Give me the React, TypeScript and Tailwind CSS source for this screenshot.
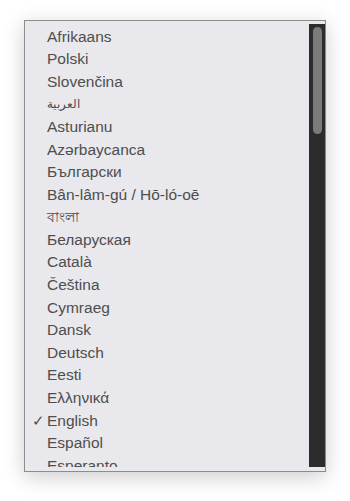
const LANGS = [
  "Afrikaans",
  "Polski",
  "Slovenčina",
  "العربية",
  "Asturianu",
  "Azərbaycanca",
  "Български",
  "Bân-lâm-gú / Hō-ló-oē",
  "বাংলা",
  "Беларуская",
  "Català",
  "Čeština",
  "Cymraeg",
  "Dansk",
  "Deutsch",
  "Eesti",
  "Ελληνικά",
  "English",
  "Español",
  "Esperanto",
];

const SELECTED = "English";

// Arabic and Bengali render smaller in the native popup
const sizeFor = (l: string) =>
  l === "العربية" ? "text-[12px]" : l === "বাংলা" ? "text-[14px]" : "text-[15.5px]";

export default function App() {
  return (
    <div className="w-[350px] h-[501px] bg-white pt-[20px] pl-[24px] font-['Liberation_Sans','Noto_Sans',sans-serif]">
      <div className="w-[302px] h-[452px] border border-[#8c8c8c] bg-[#e9e8ed] pt-[3px] pb-[4px] shadow-[0_5px_20px_rgba(0,0,0,0.2)]">
        <div className="flex h-[443px]">
          {/* option list, clipped at the bottom like the native popup */}
          <div className="flex-1 min-w-0 overflow-hidden pt-[1px]">
            {LANGS.map((l) => (
              <div key={l} className="flex items-center h-[22.6px] text-[#4e4e4e] leading-none">
                <span className="w-[22px] shrink-0 text-right pr-[2px] text-[15px]">{l === SELECTED ? "✓" : ""}</span>
                <span className={`whitespace-nowrap ${sizeFor(l)}`}>{l}</span>
              </div>
            ))}
          </div>
          {/* scrollbar */}
          <div className="w-[16px] shrink-0 bg-[#2c2c2c] pt-[3px] pl-[4px]">
            <div className="w-[9px] h-[107px] rounded-full bg-[#7b7b7b]" />
          </div>
        </div>
      </div>
    </div>
  );
}
